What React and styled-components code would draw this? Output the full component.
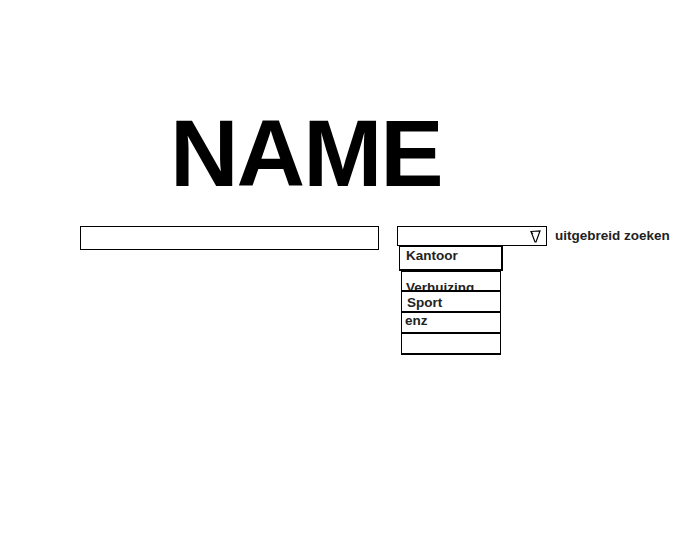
import React from 'react'
import styled, { createGlobalStyle } from "styled-components";

const GlobalStyle = createGlobalStyle`
  html, body {
    margin: 0;
    padding: 0;
    background: #fff;
  }
  body {
    font-family: "Liberation Sans", Arial, sans-serif;
    color: #111;
  }
`;

const Page = styled.div`
  width: 687px;
  height: 558px;
  display: flex;
  flex-direction: column;
  padding-top: 106px;
  box-sizing: border-box;
`;

const Title = styled.h1`
  margin: 0 0 0 170px;
  font-size: 95px;
  line-height: 95px;
  font-weight: 700;
  letter-spacing: -2px;
  color: #000;
`;

const SearchRow = styled.div`
  display: flex;
  align-items: flex-start;
  margin-top: 25px;
  padding-left: 80px;
`;

const SearchInput = styled.input`
  width: 299px;
  height: 24px;
  box-sizing: border-box;
  border: 1px solid #000;
  margin: 0;
  padding: 0 4px;
  outline: none;
`;

const DropColumn = styled.div`
  display: flex;
  flex-direction: column;
  margin-left: 18px;
`;

const SelectBox = styled.div`
  width: 150px;
  height: 20px;
  box-sizing: border-box;
  border: 1px solid #000;
  display: flex;
  justify-content: flex-end;
  align-items: center;
  padding-right: 5px;
`;

const AdvancedLink = styled.span`
  margin-left: 8px;
  margin-top: 2px;
  font-size: 13.5px;
  font-weight: 700;
  color: #222;
`;

const Option = styled.div`
  width: ${p => p.$w}px;
  height: ${p => p.$h}px;
  margin-left: ${p => p.$offset}px;
  box-sizing: border-box;
  border: 1px solid #000;
  border-top: ${p => (p.$first ? 1 : 0)}px solid #000;
  border-bottom-width: 2px;
  border-right-width: ${p => p.$right || 1}px;
  padding-left: ${p => p.$pad}px;
  padding-top: ${p => p.$top}px;
  font-size: 13.5px;
  font-weight: 700;
  line-height: 15px;
  color: #222;
  overflow: hidden;
  white-space: nowrap;
`;

const Arrow = () => (
  <svg width="11" height="13" viewBox="0 0 11 13">
    <path d="M1 1.5 L10 1 L6 12 L5 12 Z" fill="none" stroke="#000" strokeWidth="1.2" />
    <path d="M1 1.5 L3 4" fill="none" stroke="#000" strokeWidth="1" />
  </svg>
);

export default function App() {
  return (
    <Page>
      <GlobalStyle />
      <Title>NAME</Title>
      <SearchRow>
        <SearchInput />
        <DropColumn>
          <SelectBox>
            <Arrow />
          </SelectBox>
          <Option $first $w={104} $h={25} $offset={2} $pad={6} $top={1} $right={2}>Kantoor</Option>
          <Option $first $w={100} $h={21} $offset={4} $pad={4} $top={8}>Verhuizing</Option>
          <Option $w={100} $h={21} $offset={4} $pad={5} $top={3}>Sport</Option>
          <Option $w={100} $h={21} $offset={4} $pad={3} $top={0}>enz</Option>
          <Option $w={100} $h={21} $offset={4} $pad={3} $top={0}></Option>
        </DropColumn>
        <AdvancedLink>uitgebreid zoeken</AdvancedLink>
      </SearchRow>
    </Page>
  )
}
